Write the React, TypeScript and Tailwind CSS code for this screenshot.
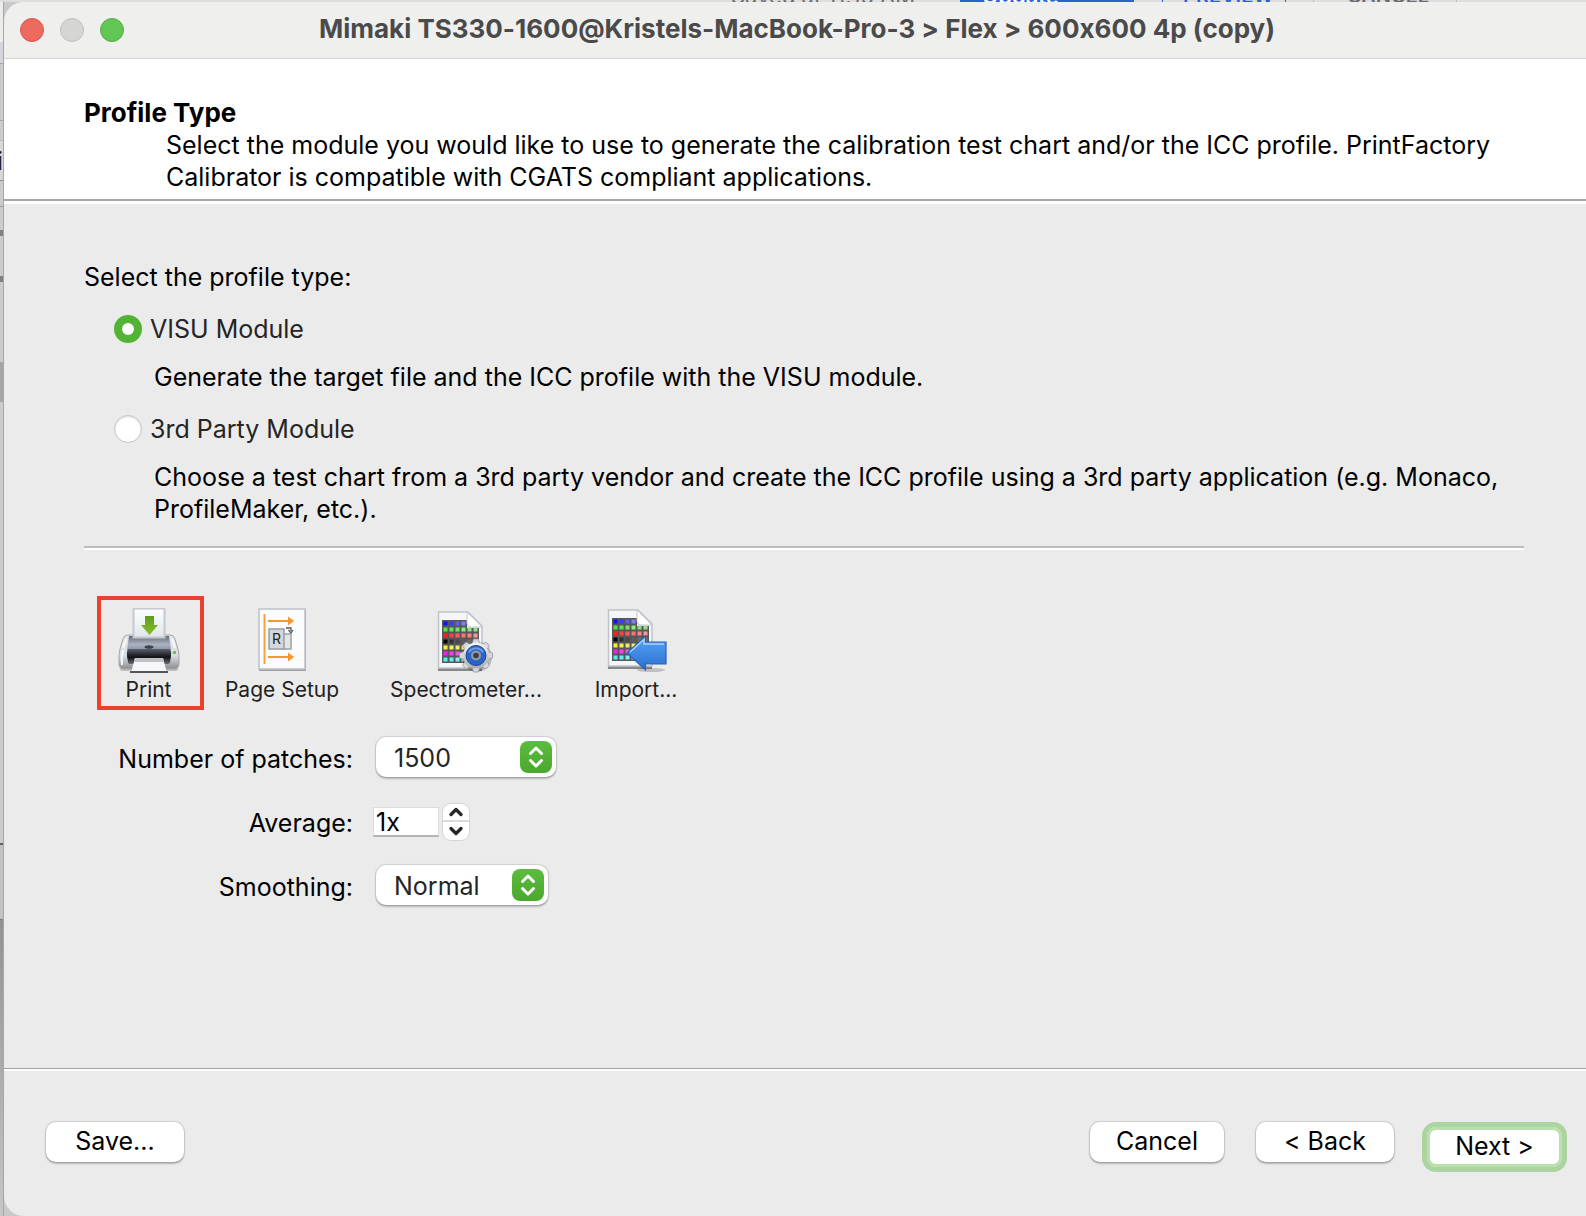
import React, { useState } from "react";
import { ChevronDown, ChevronUp } from "lucide-react";

const buttonLook =
  "h-10 rounded-[10px] bg-white pb-0.5 text-center text-black shadow-[0_0_1px_1px_rgba(0,0,0,0.12),0_2px_2px_rgba(0,0,0,0.22)]";

function PrinterIcon() {
  return (
    <svg viewBox="0 0 62 66" className="h-[66px] w-[62px]" aria-hidden="true">
      <defs>
        <linearGradient id="paper" x1="0" y1="0" x2="0" y2="1">
          <stop offset="0" stopColor="#fdfefe" />
          <stop offset="1" stopColor="#dfe6ea" />
        </linearGradient>
        <linearGradient id="shell" x1="0" y1="0" x2="0" y2="1">
          <stop offset="0" stopColor="#e4e7ea" />
          <stop offset="0.6" stopColor="#dcdfe1" />
          <stop offset="1" stopColor="#8b8e91" />
        </linearGradient>
        <linearGradient id="lid" x1="0" y1="0" x2="0" y2="1">
          <stop offset="0" stopColor="#656c79" />
          <stop offset="0.6" stopColor="#a9b2c1" />
          <stop offset="1" stopColor="#8c95a6" />
        </linearGradient>
        <linearGradient id="down" x1="0" y1="0" x2="0" y2="1">
          <stop offset="0" stopColor="#5f9c16" />
          <stop offset="1" stopColor="#86bf2e" />
        </linearGradient>
        <linearGradient id="slot" x1="0" y1="0" x2="0" y2="1">
          <stop offset="0" stopColor="#5a606c" />
          <stop offset="0.55" stopColor="#101215" />
          <stop offset="1" stopColor="#6a6e73" />
        </linearGradient>
      </defs>
      <rect x="2" y="59" width="58" height="4" rx="2" fill="#000" opacity="0.18" />
      <path d="M10 27 H52 Q56 27 57 31 L60 41 Q61 45 61 50 V56 Q61 61 56 61 H6 Q1 61 1 56 V50 Q1 45 2 41 L5 31 Q6 27 10 27 Z" fill="url(#shell)" stroke="#a3a6aa" strokeWidth="1" />
      <path d="M11 28 H51 L53 42 H9 Z" fill="url(#lid)" />
      <rect x="15.500" y="0.500" width="31" height="29" fill="url(#paper)" stroke="#c5c8d0" strokeWidth="2" />
      <path d="M27 8 H36 V17 H40 L31.500 27 L23 17 H27 Z" fill="url(#down)" />
      <path d="M10 41 H52 Q54 44 53 48 L52 54 Q52 56 50 56 H12 Q10 56 10 54 L9 48 Q8 44 10 41 Z" fill="url(#slot)" />
      <ellipse cx="31" cy="39" rx="4.500" ry="1.800" fill="#3c414b" />
      <path d="M17 50 H45 L49 65 H13 Z" fill="#f6f7f8" />
      <path d="M17 50 H45 L46 54 H16 Z" fill="#c0c3c6" />
      <rect x="12" y="63" width="38" height="2" fill="#54575a" />
      <rect x="55" y="43" width="3" height="3" rx="1" fill="#65c33a" />
      <path d="M5 42 Q3 50 4 57" stroke="#fff" strokeWidth="2" fill="none" opacity="0.9" />
      <path d="M8 31 L5 40 M54 31 L57 40" stroke="#fff" strokeWidth="2" fill="none" opacity="0.8" />
    </svg>
  );
}

function PageSetupIcon() {
  return (
    <svg viewBox="0 0 62 66" className="h-[66px] w-[62px]" aria-hidden="true">
      <rect x="8" y="2" width="47" height="61" fill="#7d8084" opacity="0.7" />
      <rect x="8" y="1" width="46" height="60" fill="#fbfcfd" stroke="#bcc1cb" strokeWidth="1.500" />
      <path d="M13.500 6 V56" stroke="#f9a23c" strokeWidth="2" />
      <g stroke="#f9962c" strokeWidth="2" fill="#f9962c">
        <path d="M17 13 H38" />
        <path d="M38 10.500 L41.500 13 L38 15.500 Z" />
        <path d="M17 49 H38" />
        <path d="M38 46.500 L41.500 49 L38 51.500 Z" />
      </g>
      <rect x="31" y="26" width="9" height="15" fill="#e3e5e8" stroke="#9da1a8" strokeWidth="1.500" />
      <rect x="18" y="21" width="15" height="20" fill="#d4d7db" stroke="#989ca4" strokeWidth="1.500" />
      <text x="25.500" y="36" textAnchor="middle" fontFamily="Inter, sans-serif" fontSize="14" fill="#222">R</text>
      <path d="M35 20 H40 V23 M37.500 22 L40 25 L42 22" stroke="#55585c" strokeWidth="1.300" fill="none" />
    </svg>
  );
}

const patchRows = [
  ["#1212ff", "#3c3cff", "#5c5cff", "#7d7dff", "", ""],
  ["#4fe83c", "#5fe84f", "#72e866", "#8aee80", "#8ddb86", "#97dd90"],
  ["#ff2020", "#ff4040", "#ff5c5c", "#ff7272", "#ff8686", "#f59a9a"],
  ["#050505", "#303030", "#484848", "#5c5c5c", "#6c6c6c", "#777777"],
  ["#f6f032", "#f6f050", "#f0ec66", "#f0ec66", "#e8e488", "#e8e488"],
  ["#fb1cf2", "#fb3cf2", "#ee58ea", "#ee68ea", "#ee80ea", "#ee90ea"],
  ["#4ff0ee", "#66eeee", "#7eeeee", "#8eeeee", "#a0eeee", "#b0eeee"],
];

function ChartPage() {
  return (
    <g>
      <path d="M3 59 H47 V62 H3 Z" fill="#6d7074" opacity="0.8" />
      <path d="M3.500 3 H33 L47 17 V59 H3.500 Z" fill="#f5f6f8" stroke="#bfc3cb" strokeWidth="1.500" />
      <path d="M7 11 H32 V19 H44 V54 H7 Z" fill="#57575a" />
      {patchRows.map((row, r) =>
        row.map((color, c) =>
          color ? <rect key={`${r}-${c}`} x={8.5 + c * 6} y={12.5 + r * 6} width="4" height="4" fill={color} /> : null,
        ),
      )}
      <path d="M32 3 V14 Q32 18 36 18 H47 Z" fill="#fff" stroke="#c3c6cc" strokeWidth="1" />
    </g>
  );
}

function SpectrometerIcon() {
  return (
    <svg viewBox="0 0 62 66" className="h-[66px] w-[62px]" aria-hidden="true">
      <defs>
        <linearGradient id="steel" x1="0" y1="0" x2="0" y2="1">
          <stop offset="0" stopColor="#f4f5f6" />
          <stop offset="1" stopColor="#a9acb0" />
        </linearGradient>
      </defs>
      <g transform="translate(0 1)">
        <ChartPage />
      </g>
      <circle cx="42" cy="49" r="15" fill="#000" opacity="0.22" />
      {[0, 45, 90, 135].map((a) => (
        <path key={a} d="M37.500 35 L38.500 31 H43.500 L44.500 35 V60 L43.500 64 H38.500 L37.500 60 Z" fill="#d6d8db" stroke="#96999d" strokeWidth="0.800" transform={`rotate(${a} 41 47.500)`} />
      ))}
      <circle cx="41" cy="47.500" r="13" fill="url(#steel)" />
      <circle cx="41" cy="47.500" r="10" fill="#2a63c8" stroke="#1f4791" strokeWidth="1" />
      <path d="M34 44.500 A8 8 0 0 1 48 44.500" stroke="#6a9be6" strokeWidth="2" fill="none" />
      <circle cx="41" cy="47.500" r="5" fill="#9299a4" />
      <circle cx="41" cy="47.500" r="2.800" fill="#3a3d42" />
    </svg>
  );
}

function ImportIcon() {
  return (
    <svg viewBox="0 0 62 66" className="h-[66px] w-[62px]" aria-hidden="true">
      <defs>
        <linearGradient id="arrow" x1="0" y1="0" x2="0" y2="1">
          <stop offset="0" stopColor="#58a4f3" />
          <stop offset="1" stopColor="#2a70d0" />
        </linearGradient>
      </defs>
      <g transform="translate(0 -1)">
        <ChartPage />
      </g>
      <ellipse cx="46" cy="62" rx="14" ry="2" fill="#000" opacity="0.18" />
      <path d="M22 45 L40.500 28 V34 H61 V56 H40.500 V62 Z" fill="url(#arrow)" stroke="#2862bb" strokeWidth="1.200" />
      <path d="M25 44 L39 31.500 V36 H59" fill="none" stroke="#a6d2fb" strokeWidth="1.500" />
    </svg>
  );
}

function ToolButton({ label, icon, className }: { label: string; icon: React.ReactNode; className: string }) {
  return (
    <button type="button" className={`flex h-[114px] flex-col items-center gap-0.5 pt-2 text-[21px] leading-7 text-[#222] ${className}`}>
      {icon}
      <span className="whitespace-nowrap">{label}</span>
    </button>
  );
}

function PopUp({ id, options, className }: { id: string; options: string[]; className: string }) {
  return (
    <div className={`relative ${className}`}>
      <select
        id={id}
        className="h-10 w-full appearance-none rounded-[10px] bg-white pt-0.5 pl-[18px] text-[#252525] shadow-[0_0_1px_1px_rgba(0,0,0,0.12),0_2px_2px_rgba(0,0,0,0.22)]"
      >
        {options.map((o) => (
          <option key={o}>{o}</option>
        ))}
      </select>
      <span className="pointer-events-none absolute top-1 right-1 flex size-8 items-center justify-center rounded-lg bg-linear-to-b from-[#5abc3c] to-[#4ba82e]">
        <svg viewBox="0 0 32 32" className="size-8" fill="none" stroke="#fff" strokeWidth="3" strokeLinecap="round" strokeLinejoin="round" aria-hidden="true">
          <path d="M10.500 12.500 L16 7 L21.500 12.500 M10.500 19.500 L16 25 L21.500 19.500" />
        </svg>
      </span>
    </div>
  );
}

function ModuleOption({ label, checked, onSelect, children }: { label: string; checked: boolean; onSelect: () => void; children: React.ReactNode }) {
  return (
    <div>
      <label className="flex h-8 items-center gap-2 text-[#252525]">
        <input
          type="radio"
          name="profile-type"
          checked={checked}
          onChange={onSelect}
          className="size-7 shrink-0 appearance-none rounded-full border border-[#c4c4c4] bg-white shadow-[inset_0_1px_2px_rgba(0,0,0,0.15)] checked:border-8 checked:border-[#51b434] checked:shadow-none"
        />
        {label}
      </label>
      <p className="mt-4 ml-10">{children}</p>
    </div>
  );
}

function BackgroundToolbar() {
  return (
    <div className="flex h-0.5 items-end overflow-hidden bg-[#dededd] pl-[731px] text-[22px] leading-3 whitespace-nowrap text-[#6b6b70]">
      <span className="w-[229px] shrink-0">Saved at 11:15 AM</span>
      <span className="w-[174px] shrink-0 bg-[#2b62cc] pl-[22px] font-semibold text-white">Update</span>
      <span className="ml-7 w-[124px] shrink-0 border-x border-[#2b62cc] pl-5 text-[20px] font-semibold text-[#2b62cc]">PREVIEW</span>
      <span className="ml-[27px] w-[144px] shrink-0 border-x border-[#bdbdc4] pl-[33px] text-[20px] font-semibold">CANCEL</span>
    </div>
  );
}

function BackgroundEdge() {
  return (
    <div className="flex w-1 shrink-0 flex-col overflow-hidden border-r border-[#a6a6a6] bg-[#cccccb]">
      <div className="h-10 bg-[#ededed]" />
      <div className="h-[22px] border-b border-[#a9a9a9] bg-[#d5d5dc]" />
      <div className="h-[57px] border-b border-[#a9a9a9]" />
      <div className="h-5 border-b border-[#b5b5b5]" />
      <div className="flex h-10 items-center justify-end border-b border-[#8d8d8d] bg-[#d8d8d8] text-[#222]">i</div>
      <div className="h-[26px] border-b border-[#9b9b9b]" />
      <div className="h-[29px] border-b-[6px] border-[#808080]" />
      <div className="h-[46px] border-b-[6px] border-[#808080]" />
      <div className="h-20" />
      <div className="h-10 bg-[#a5a5a5]" />
      <div className="h-[443px] border-b-2 border-[#5f5f5f]" />
      <div className="h-[75px] border-b border-[#7d7d7d] bg-[#c3c3c2]" />
      <div className="grow bg-linear-to-b from-[#929292] to-[#c6c6c6]" />
    </div>
  );
}

export default function App() {
  const [module, setModule] = useState("visu");
  const [average, setAverage] = useState(1);

  return (
    <div className="flex min-h-screen flex-col overflow-hidden bg-[#c9c9c9] font-[Inter,sans-serif] text-[25px] leading-8 text-black [font-feature-settings:'calt'_0]">
      <BackgroundToolbar />
      <div className="flex grow">
        <BackgroundEdge />
        <main className="flex min-w-0 grow flex-col overflow-hidden rounded-l-[20px] bg-[#ebebeb]">
          <header className="flex h-[57px] items-center border-b border-[#d4d4d3] bg-[#efefee]">
            <div className="flex w-[315px] shrink-0 gap-4 pl-4">
              <button type="button" aria-label="Close" className="size-6 rounded-full border border-[#d6564b] bg-[#ed6a5e]" />
              <button type="button" aria-label="Minimize" className="size-6 rounded-full border border-[#bfbfbe] bg-[#d5d5d4]" />
              <button type="button" aria-label="Zoom" className="size-6 rounded-full border border-[#52ad43] bg-[#61c654]" />
            </div>
            <h1 className="pb-0.5 text-[26px] font-bold whitespace-nowrap text-[#4a4a4a]">Mimaki TS330-1600@Kristels-MacBook-Pro-3 &gt; Flex &gt; 600x600 4p (copy)</h1>
          </header>

          <section className="border-b-2 border-[#a8a8a8] bg-white pt-[38px] pr-16 pb-1.5 pl-20">
            <h2 className="text-[26px] font-bold">Profile Type</h2>
            <p className="ml-[82px]">
              Select the module you would like to use to generate the calibration test chart and/or the ICC profile. PrintFactory Calibrator is compatible with CGATS compliant applications.
            </p>
          </section>

          <section className="grow border-t-[3px] border-white pt-[57px] pr-[62px] pb-10 pl-20">
            <h3>Select the profile type:</h3>
            <div className="mt-5 ml-[30px] flex flex-col gap-5">
              <ModuleOption label="VISU Module" checked={module === "visu"} onSelect={() => setModule("visu")}>
                Generate the target file and the ICC profile with the VISU module.
              </ModuleOption>
              <ModuleOption label="3rd Party Module" checked={module === "other"} onSelect={() => setModule("other")}>
                Choose a test chart from a 3rd party vendor and create the ICC profile using a 3rd party application (e.g. Monaco, ProfileMaker, etc.).
              </ModuleOption>
            </div>
            <hr className="mt-[21px] h-1 border-t-2 border-b-2 border-t-[#bdbdbd] border-b-white" />

            <div className="mt-[46px] ml-[13px] flex">
              <ToolButton label="Print" icon={<PrinterIcon />} className="w-[107px] border-4 border-[#e9412b] pr-1" />
              <ToolButton label="Page Setup" icon={<PageSetupIcon />} className="w-[156px] border-y-4 border-transparent" />
              <ToolButton label="Spectrometer..." icon={<SpectrometerIcon />} className="w-[212px] border-y-4 border-transparent" />
              <ToolButton label="Import..." icon={<ImportIcon />} className="w-32 border-y-4 border-transparent" />
            </div>

            <div className="mt-[27px] grid grid-cols-[269px_1fr] items-center gap-x-5 gap-y-6">
              <label htmlFor="patches" className="pt-1 text-right">Number of patches:</label>
              <PopUp id="patches" options={["1500", "1000", "500"]} className="ml-[3px] w-[180px]" />
              <label htmlFor="average" className="pt-1 text-right">Average:</label>
              <div className="flex h-10 items-center gap-1 pt-0.5">
                <input id="average" readOnly value={`${average}x`} className="h-[30px] w-[66px] border border-b-2 border-[#dcdcdc] border-b-[#b4b4b4] bg-white pl-0.5" />
                <div className="flex h-9 w-[26px] flex-col divide-y-2 divide-[#dadada] overflow-hidden rounded-lg bg-white shadow-[0_0_1px_1px_rgba(0,0,0,0.1)]">
                  <button type="button" aria-label="Increase average" onClick={() => setAverage(average + 1)} className="flex h-1/2 items-center justify-center">
                    <ChevronUp size={20} strokeWidth={4} color="#262626" className="shrink-0" />
                  </button>
                  <button type="button" aria-label="Decrease average" onClick={() => setAverage(Math.max(1, average - 1))} className="flex h-1/2 items-center justify-center">
                    <ChevronDown size={20} strokeWidth={4} color="#262626" className="shrink-0" />
                  </button>
                </div>
              </div>
              <label htmlFor="smoothing" className="pt-1 text-right">Smoothing:</label>
              <PopUp id="smoothing" options={["Normal", "Low", "High"]} className="ml-[3px] w-[172px]" />
            </div>
          </section>

          <footer className="border-t border-[#a0a0a0]">
            <div className="flex h-[147px] items-start gap-8 border-t-2 border-white pt-[51px] pr-[19px] pl-[42px]">
              <button type="button" className={`${buttonLook} mr-auto w-[138px]`}>Save...</button>
              <button type="button" className={`${buttonLook} w-[134px]`}>Cancel</button>
              <button type="button" className={`${buttonLook} w-[138px]`}>&lt; Back</button>
              <button type="button" className="-ml-1 h-[50px] w-[145px] rounded-[14px] border-[5px] border-[#acd4a0] bg-white pb-0.5 shadow-[inset_0_0_0_3px_#b9e0ae]">Next &gt;</button>
            </div>
          </footer>
        </main>
      </div>
    </div>
  );
}
